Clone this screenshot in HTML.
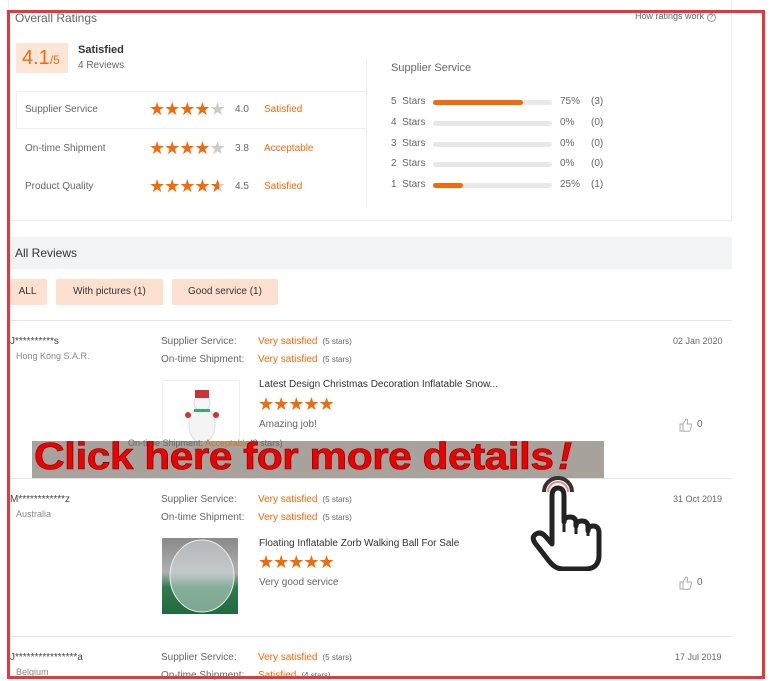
<!DOCTYPE html>
<html><head><meta charset="utf-8"><style>
*{margin:0;padding:0;box-sizing:border-box}
body{width:777px;height:681px;overflow:hidden;background:#fff;font-family:"Liberation Sans",sans-serif;color:#333;position:relative}
.a{position:absolute;white-space:nowrap}
.g{color:#666}
.o{color:#f26b0a}
.s{color:#f26b0a;letter-spacing:-1px}
.gs{color:#ccc}
.bar{position:absolute;height:5px;background:#e8e8e8;border-radius:3px;width:119px;left:433px}
.bar i{display:block;height:5px;background:#f26b0a;border-radius:3px}
.sm{font-size:10px}
</style></head><body>
<div class="a" style="left:8px;top:0;width:724px;height:221px;border:1px solid #eee;border-top:none"></div>
<div class="a g" style="left:15px;top:11px;font-size:12px">Overall Ratings</div>
<div class="a g" style="left:635px;top:11px;font-size:9px">How ratings work <span style="display:inline-block;width:9px;height:9px;border:1px solid #999;border-radius:50%;font-size:7px;text-align:center;line-height:8px">?</span></div>
<div class="a" style="left:16px;top:43px;width:52px;height:30px;background:#fde6d6;"></div>
<div class="a o" style="left:22px;top:47px;font-size:20px">4.1<span style="font-size:12px">/5</span></div>
<div class="a" style="left:78px;top:44px;font-size:11px;font-weight:bold;color:#333">Satisfied</div>
<div class="a g" style="left:78px;top:60px;font-size:10px">4 Reviews</div>
<div class="a" style="left:16px;top:91px;width:350px;height:38px;border-top:1px solid #eee;border-bottom:1px solid #eee;border-left:1px solid #eee"></div>
<div class="a" style="left:366px;top:60px;width:1px;height:148px;background:#eee"></div>
<div class="a g" style="left:25px;top:104px;font-size:10px">Supplier Service</div>
<div class="a" style="left:149px;top:99px;font-size:18px"><span class="s">★★★★</span><span class="gs">★</span></div>
<div class="a g" style="left:235px;top:104px;font-size:10px">4.0</div>
<div class="a o" style="left:264px;top:104px;font-size:10px">Satisfied</div>
<div class="a g" style="left:25px;top:143px;font-size:10px">On-time Shipment</div>
<div class="a" style="left:149px;top:138px;font-size:18px"><span class="s">★★★★</span><span class="gs">★</span></div>
<div class="a g" style="left:235px;top:143px;font-size:10px">3.8</div>
<div class="a o" style="left:264px;top:143px;font-size:10px">Acceptable</div>
<div class="a g" style="left:25px;top:181px;font-size:10px">Product Quality</div>
<div class="a" style="left:149px;top:176px;font-size:18px"><span class="s">★★★★</span><span style="background:linear-gradient(90deg,#f26b0a 55%,#ccc 55%);-webkit-background-clip:text;color:transparent">★</span></div>
<div class="a g" style="left:235px;top:181px;font-size:10px">4.5</div>
<div class="a o" style="left:264px;top:181px;font-size:10px">Satisfied</div>

<div class="a g" style="left:391px;top:62px;font-size:11px">Supplier Service</div>
<div class="a g" style="left:391px;top:96px;font-size:10px">5&nbsp; Stars</div><div class="bar" style="top:100px"><i style="width:90px"></i></div><div class="a g" style="left:560px;top:96px;font-size:10px">75%</div><div class="a g" style="left:591px;top:96px;font-size:10px">(3)</div>
<div class="a g" style="left:391px;top:117px;font-size:10px">4&nbsp; Stars</div><div class="bar" style="top:121px"></div><div class="a g" style="left:560px;top:117px;font-size:10px">0%</div><div class="a g" style="left:591px;top:117px;font-size:10px">(0)</div>
<div class="a g" style="left:391px;top:138px;font-size:10px">3&nbsp; Stars</div><div class="bar" style="top:142px"></div><div class="a g" style="left:560px;top:138px;font-size:10px">0%</div><div class="a g" style="left:591px;top:138px;font-size:10px">(0)</div>
<div class="a g" style="left:391px;top:158px;font-size:10px">2&nbsp; Stars</div><div class="bar" style="top:162px"></div><div class="a g" style="left:560px;top:158px;font-size:10px">0%</div><div class="a g" style="left:591px;top:158px;font-size:10px">(0)</div>
<div class="a g" style="left:391px;top:179px;font-size:10px">1&nbsp; Stars</div><div class="bar" style="top:183px"><i style="width:30px"></i></div><div class="a g" style="left:560px;top:179px;font-size:10px">25%</div><div class="a g" style="left:591px;top:179px;font-size:10px">(1)</div>

<div class="a" style="left:8px;top:237px;width:724px;height:32px;background:#f2f3f5"></div>
<div class="a" style="left:15px;top:246px;font-size:12px;color:#333">All Reviews</div>
<div class="a" style="left:8px;top:279px;width:39px;height:26px;background:#fde0cf;border-radius:2px;font-size:10px;line-height:26px;text-align:center">ALL</div>
<div class="a" style="left:56px;top:279px;width:107px;height:26px;background:#fde0cf;border-radius:2px;font-size:10px;line-height:26px;text-align:center">With pictures (1)</div>
<div class="a" style="left:172px;top:279px;width:106px;height:26px;background:#fde0cf;border-radius:2px;font-size:10px;line-height:26px;text-align:center">Good service (1)</div>
<div class="a" style="left:8px;top:320px;width:724px;height:1px;background:#e5e5e5"></div>

<div class="a sm" style="left:10px;top:336px;color:#444">J**********s</div>
<div class="a g" style="left:16px;top:351px;font-size:9px;color:#888">Hong Kong S.A.R.</div>
<div class="a g sm" style="left:161px;top:336px">Supplier Service:</div>
<div class="a o sm" style="left:258px;top:336px">Very satisfied <span class="g" style="font-size:8px">&nbsp;(5 stars)</span></div>
<div class="a g sm" style="left:161px;top:354px">On-time Shipment:</div>
<div class="a o sm" style="left:258px;top:354px">Very satisfied <span class="g" style="font-size:8px">&nbsp;(5 stars)</span></div>
<div class="a g" style="left:673px;top:336px;font-size:9px">02 Jan 2020</div>
<div class="a" style="left:162px;top:380px;width:78px;height:62px;border:1px solid #eee;overflow:hidden">
<svg width="78" height="62"><ellipse cx="39" cy="44" rx="13" ry="18" fill="#f4f4f4" stroke="#ddd"/><circle cx="39" cy="22" r="8" fill="#f6f6f6" stroke="#ddd"/><rect x="32" y="9" width="14" height="8" fill="#c33"/><rect x="31" y="28" width="16" height="3" fill="#3a7"/><circle cx="25" cy="34" r="3" fill="#c33"/><circle cx="53" cy="34" r="3" fill="#c33"/></svg></div>
<div class="a sm" style="left:259px;top:379px;color:#333">Latest Design Christmas Decoration Inflatable Snow...</div>
<div class="a s" style="left:258px;top:394px;font-size:18px">★★★★★</div>
<div class="a g sm" style="left:259px;top:419px">Amazing job!</div>
<svg class="a" style="left:679px;top:418px" width="13" height="14" viewBox="0 0 13 14"><path d="M1 6h3v7H1z M4 6l3-5q2 0 1.5 3L8 6h3.5q1.5 0 1 1.5l-1.5 5q-.3.8-1 .8H4" fill="none" stroke="#aaa"/></svg>
<div class="a g sm" style="left:697px;top:419px">0</div>

<div class="a" style="left:32px;top:441px;width:572px;height:38px;background:#a8a29d"></div>
<div class="a" style="left:128px;top:438px;font-size:9px;color:#666">On-time Shipment: <span style="color:#c8782a">Acceptable</span>(3 stars)</div>
<div class="a" style="left:34px;top:436px;font-size:38px;font-weight:bold;color:#e00;letter-spacing:-0.5px;-webkit-text-stroke:0.6px #700;transform:scaleX(1.12);transform-origin:0 0">Click here for more details<span style="font-style:italic;padding-left:4px">!</span></div>
<div class="a" style="left:8px;top:478px;width:724px;height:1px;background:#e5e5e5"></div>

<div class="a sm" style="left:10px;top:494px;color:#444">M************z</div>
<div class="a" style="left:16px;top:509px;font-size:9px;color:#888">Australia</div>
<div class="a g sm" style="left:161px;top:494px">Supplier Service:</div>
<div class="a o sm" style="left:258px;top:494px">Very satisfied <span class="g" style="font-size:8px">&nbsp;(5 stars)</span></div>
<div class="a g sm" style="left:161px;top:512px">On-time Shipment:</div>
<div class="a o sm" style="left:258px;top:512px">Very satisfied <span class="g" style="font-size:8px">&nbsp;(5 stars)</span></div>
<div class="a g" style="left:673px;top:494px;font-size:9px">31 Oct 2019</div>
<div class="a" style="left:162px;top:538px;width:76px;height:76px;background:linear-gradient(#8a8a8a 0,#b0b0b0 45%,#2f7a4f 65%,#1f6b3f 100%)"><svg width="76" height="76"><ellipse cx="40" cy="38" rx="32" ry="36" fill="rgba(220,225,230,.5)" stroke="#eee"/></svg></div>
<div class="a sm" style="left:259px;top:538px;color:#333">Floating Inflatable Zorb Walking Ball For Sale</div>
<div class="a s" style="left:258px;top:552px;font-size:18px">★★★★★</div>
<div class="a g sm" style="left:259px;top:577px">Very good service</div>
<svg class="a" style="left:679px;top:576px" width="13" height="14" viewBox="0 0 13 14"><path d="M1 6h3v7H1z M4 6l3-5q2 0 1.5 3L8 6h3.5q1.5 0 1 1.5l-1.5 5q-.3.8-1 .8H4" fill="none" stroke="#aaa"/></svg>
<div class="a g sm" style="left:697px;top:577px">0</div>
<div class="a" style="left:8px;top:636px;width:724px;height:1px;background:#e5e5e5"></div>

<svg class="a" style="left:530px;top:476px" width="80" height="95" viewBox="0 0 80 95">
<path d="M14 16 a14 14 0 0 1 28 0" fill="none" stroke="#333" stroke-width="4"/>
<path d="M18 16 a10 10 0 0 1 20 0" fill="none" stroke="#e88" stroke-width="2"/>
<path d="M22 20 q0-8 6-8 q6 0 6 8 v26 q0-5 6-5 q6 0 6 6 v3 q0-5 6-5 q6 0 6 6 v4 q0-5 5-5 q6 0 6 7 v22 q0 14-14 14 h-22 q-8 0-14-8 l-14-18 q-4-6 1-9 q5-3 10 3 l6 7 z" fill="#fff" stroke="#222" stroke-width="5" stroke-linejoin="round"/>
<path d="M34 46 v10 M46 50 v8 M58 54 v6" stroke="#222" stroke-width="3"/>
</svg>

<div class="a sm" style="left:10px;top:652px;color:#444">J****************a</div>
<div class="a" style="left:16px;top:667px;font-size:9px;color:#888">Belgium</div>
<div class="a g sm" style="left:161px;top:652px">Supplier Service:</div>
<div class="a o sm" style="left:258px;top:652px">Very satisfied <span class="g" style="font-size:8px">&nbsp;(5 stars)</span></div>
<div class="a g sm" style="left:161px;top:670px">On-time Shipment:</div>
<div class="a o sm" style="left:258px;top:670px">Satisfied <span class="g" style="font-size:8px">&nbsp;(4 stars)</span></div>
<div class="a g" style="left:675px;top:652px;font-size:9px">17 Jul 2019</div>

<div class="a" style="left:7px;top:10px;width:758px;height:669px;border:3px solid #e8373c"></div>
</body></html>
